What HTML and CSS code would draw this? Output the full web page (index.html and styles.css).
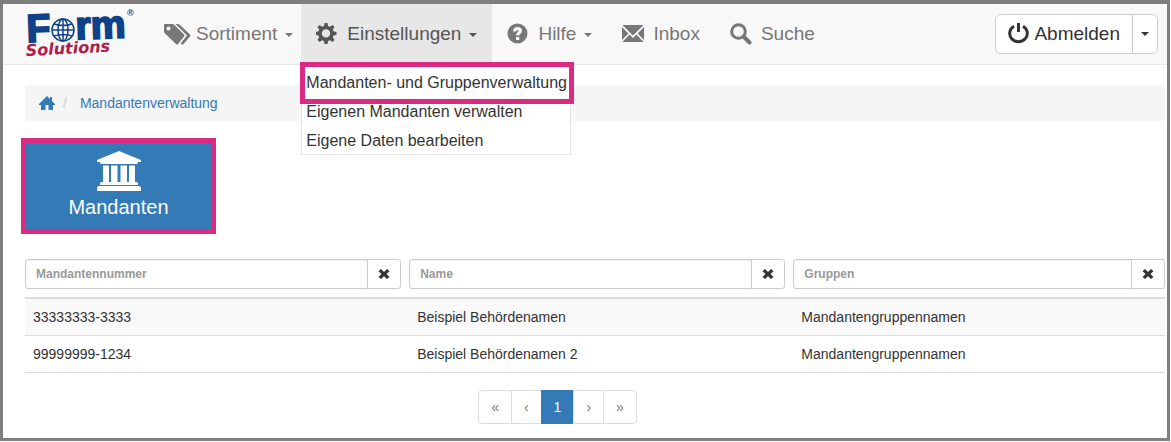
FILE: index.html
```html
<!DOCTYPE html>
<html lang="de">
<head>
<meta charset="utf-8">
<title>Mandantenverwaltung</title>
<meta name="viewport" content="width=device-width, initial-scale=1">
<link rel="stylesheet" href="styles.css">
</head>
<body>
<div class="page">
  <header class="navbar">
    <a class="brand" href="#" aria-label="Form Solutions">
      <svg class="logo" viewBox="0 0 112 60" width="112" height="60">
        <g transform="rotate(-2 3 37)" class="logo-form">
          <text x="2" y="38">F</text>
          <text x="51" y="37">rm</text>
        </g>
        <g class="globe">
          <circle cx="38" cy="26" r="11"/>
          <ellipse cx="38" cy="26" rx="5" ry="11"/>
          <path d="M38 15v22M27 26h22M29 20q9 3 18 0M29 32q9-3 18 0"/>
        </g>
        <text class="logo-sub" x="1" y="52" transform="rotate(-3 1 52)">Solutions</text>
        <text class="logo-reg" x="102" y="12">®</text>
      </svg>
    </a>
    <nav class="nav">
      <div class="nav-item">
        <a class="nav-link nav-link-tags" href="#">
          <svg class="icon-tags" viewBox="0 0 27 21" width="27" height="21"><path fill-rule="evenodd" d="M1 0h7.500q1 0 2 1l9.500 9.500q1 1 0 2L14 20q-1 1-2 0L1 9.500Q0 8.500 0 7.500V1q0-1 1-1zM4.500 2.500a2 2 0 1 0 0 4 2 2 0 0 0 0-4z"/><path d="M11.500 0H14q1 0 2 1l10 9.500q1 1 0 2L19.500 20q-1 1-2 0l-.8-.8 6.300-7.700z"/></svg>
          <span>Sortiment</span><span class="caret"></span>
        </a>
      </div>
      <div class="nav-item">
        <a class="nav-link open" href="#" aria-expanded="true">
          <svg class="icon" viewBox="0 0 22 22" width="22" height="22"><path fill-rule="evenodd" d="M8.500 0h3l.6 3 1.800.8L16.500 2l2 2-1.700 2.600.7 1.700 3 .6v3l-3 .6-.7 1.800 1.700 2.600-2 2-2.600-1.700-1.800.7-.6 3h-3l-.6-3-1.700-.7L3.600 19l-2.100-2.100 1.700-2.600-.7-1.800-2.500-.6v-3l2.500-.6.7-1.700L1.500 4l2-2 2.700 1.800L8 3zM10 6.200a4.200 4.200 0 1 0 0 8.400 4.200 4.200 0 0 0 0-8.400z"/></svg>
          <span>Einstellungen</span><span class="caret"></span>
        </a>
        <ul class="menu">
          <li class="marked"><a href="#">Mandanten- und Gruppenverwaltung</a></li>
          <li><a href="#">Eigenen Mandanten verwalten</a></li>
          <li><a href="#">Eigene Daten bearbeiten</a></li>
        </ul>
      </div>
      <div class="nav-item">
        <a class="nav-link" href="#">
          <svg class="icon" viewBox="0 0 22 22" width="22" height="22"><circle cx="10.500" cy="10.500" r="10"/><path class="cut" d="M6 8.500Q6.200 4 10.600 4q4.400 0 4.400 3.800 0 1.900-1.600 3-1.100.7-1.100 1.700H9q0-2 1.500-3.200 1-.8 1-1.400 0-1-1-1-1.200 0-1.300 1.600zM9 14h3.300v3H9z"/></svg>
          <span>Hilfe</span><span class="caret"></span>
        </a>
      </div>
      <div class="nav-item">
        <a class="nav-link" href="#">
          <svg class="icon" viewBox="0 0 22 22" width="22" height="22"><path d="M.5 2h21L11 12.500zM0 4l6.300 6.500L0 17zM22 4l-6.300 6.500L22 17zM7.500 11.500 11 15l3.500-3.500 7 7.500H.5z"/></svg>
          <span>Inbox</span>
        </a>
      </div>
      <div class="nav-item">
        <a class="nav-link" href="#">
          <svg class="icon" viewBox="0 0 22 22" width="22" height="22"><path class="line" d="M13.500 13.500l6 6"/><circle class="ring" cx="8.500" cy="8.500" r="6.800"/></svg>
          <span>Suche</span>
        </a>
      </div>
    </nav>
    <div class="btn-group">
      <button class="btn logout" type="button">
        <svg viewBox="0 0 22 22" width="22" height="22"><path class="power" d="M6 3.200a8.800 8.300 0 1 0 9 0"/><path d="M9 0h3v9H9z"/></svg>
        <span>Abmelden</span>
      </button>
      <button class="btn toggle" type="button" aria-label="Mehr"><span class="caret"></span></button>
    </div>
  </header>

  <main class="content">
    <nav class="breadcrumb">
      <a href="#" aria-label="Start"><svg viewBox="0 0 16 14" width="16" height="14"><path d="M8 0l3 3V1h2v4l3 3v1h-2v5H9.500V9h-3v5H2V9H0V8z"/></svg></a>
      <span class="slash">/</span>
      <a href="#">Mandantenverwaltung</a>
    </nav>

    <button class="tile" type="button">
      <svg viewBox="0 0 44 40" width="44" height="40"><path d="M22 0l22 9v2h-3q0 2-1.500 2h-35Q3 13 3 11H0V9zM6 14.500h6V31h2V14.500h6.500V31h3V14.500H30V31h2V14.500h6V31h1.500q1.500 0 1.500 1.500V34H3v-1.500Q3 31 4.500 31H6zM2.500 35h39Q44 35 44 37v3H0v-3q0-2 2.500-2z"/></svg>
      <span>Mandanten</span>
    </button>

    <table class="table">
      <thead>
        <tr>
          <th><div class="filter"><input type="text" placeholder="Mandantennummer" aria-label="Mandantennummer"><button type="button" aria-label="Mandantennummer leeren"><svg viewBox="0 0 12 12" width="12" height="12"><path d="M3 1l3 3 3-3 2.500 2.200L8.500 6l3 3L9 11 6 8.200 3 11 .5 9l3-3-3-2.800z"/></svg></button></div></th>
          <th><div class="filter"><input type="text" placeholder="Name" aria-label="Name"><button type="button" aria-label="Name leeren"><svg viewBox="0 0 12 12" width="12" height="12"><path d="M3 1l3 3 3-3 2.500 2.200L8.500 6l3 3L9 11 6 8.200 3 11 .5 9l3-3-3-2.800z"/></svg></button></div></th>
          <th><div class="filter"><input type="text" placeholder="Gruppen" aria-label="Gruppen"><button type="button" aria-label="Gruppen leeren"><svg viewBox="0 0 12 12" width="12" height="12"><path d="M3 1l3 3 3-3 2.500 2.200L8.500 6l3 3L9 11 6 8.200 3 11 .5 9l3-3-3-2.800z"/></svg></button></div></th>
        </tr>
      </thead>
      <tbody>
        <tr><td>33333333-3333</td><td>Beispiel Behördenamen</td><td>Mandantengruppennamen</td></tr>
        <tr><td>99999999-1234</td><td>Beispiel Behördenamen 2</td><td>Mandantengruppennamen</td></tr>
      </tbody>
    </table>

    <nav class="pagination" aria-label="Seiten">
      <a href="#">«</a><a href="#">‹</a><a class="active" href="#">1</a><a href="#">›</a><a href="#">»</a>
    </nav>
  </main>
</div>
</body>
</html>
```

FILE: styles.css
```css
*, *::after { box-sizing: border-box; }

body {
  margin: 0;
  background: #fff;
  color: #333;
  font: 14px/20px "Liberation Sans", Arial, sans-serif;
}

a { text-decoration: none; }

button, input { font: inherit; }

svg { fill: currentColor; flex: none; }

.page {
  min-height: calc(100vh - 1px);
  margin-right: 1px;
  border: 3px solid #7f7f7f;
  border-top-width: 4px;
}

/* Navigation bar */
.navbar {
  display: flex;
  align-items: center;
  padding: 0 9px 0 22px;
  background: #f8f8f8;
  border-bottom: 1px solid #e7e7e7;
}

.brand { display: flex; width: 124px; }

.logo { overflow: visible; }

.logo-form {
  fill: #0f4189;
  stroke: #0f4189;
  stroke-width: 2;
  font: bold 39px "Liberation Sans", Arial, sans-serif;
}

.globe { fill: none; stroke: #0f4189; stroke-width: 1.5; }

.logo-sub {
  fill: #b01c48;
  font: italic bold 16px "DejaVu Sans", sans-serif;
}

.logo-reg { fill: #0f4189; font: bold 9px "Liberation Sans", sans-serif; }

.nav { display: flex; flex: 1; }

.nav-item { position: relative; }

.nav-link {
  display: flex;
  align-items: center;
  height: 60px;
  padding: 0 15px;
  color: #777;
  font-size: 19px;
}

.nav-link-tags { padding-right: 8px; }

.nav-link.open { background: #e7e7e7; color: #555; }

.icon { margin-right: 9px; }

.icon-tags { margin-right: 5px; }

.cut { fill: #f8f8f8; }

.line { stroke: currentColor; stroke-width: 4; stroke-linecap: round; }

.ring { fill: none; stroke: currentColor; stroke-width: 3; }

.power { fill: none; stroke: currentColor; stroke-width: 3; }

.caret {
  border: 4px solid transparent;
  border-top-color: currentColor;
  border-bottom: 0;
}

.nav-link .caret { margin: 2px 0 0 8px; }

.menu {
  position: absolute;
  top: 61px;
  left: 0;
  z-index: 1;
  margin: 0;
  padding: 3px 3px 0 4px;
  list-style: none;
  background: #fff;
  border: 1px solid #e4e4e4;
  border-top: 0;
}

.menu a {
  display: block;
  color: #333;
  font-size: 16px;
  line-height: 29px;
  white-space: nowrap;
}

.menu li:last-child { height: 28px; }

/* Highlight frame around the selected entry */
.marked::after {
  content: "";
  position: absolute;
  top: -3px;
  left: -2px;
  right: -4px;
  height: 42px;
  border: 5px solid #db2a82;
}

.btn-group { display: flex; }

.btn {
  display: flex;
  align-items: center;
  height: 40px;
  border: 1px solid #ccc;
  background: #fff;
  color: #333;
  font-size: 19px;
}

.logout { gap: 4px; padding: 0 12px; border-radius: 6px 0 0 6px; }

.toggle { margin-left: -1px; padding: 0 8px; border-radius: 0 6px 6px 0; }

/* Page body */
.content { padding: 20px 2px 14px 22px; }

.breadcrumb {
  display: flex;
  align-items: center;
  height: 36px;
  padding: 0 14px;
  border-radius: 4px;
  background: #f5f5f5;
}

.breadcrumb a { display: flex; color: #337ab7; }

.slash { padding: 0 13px 0 8px; color: #ccc; }

.tile {
  display: flex;
  flex-direction: column;
  align-items: center;
  gap: 4px;
  width: 195px;
  margin: 17px 0 25px -4px;
  padding: 8px 0 9px;
  border: 5px solid #db2a82;
  background: #337ab7;
  color: #fff;
  font-size: 20px;
  line-height: 25px;
}

.table {
  width: 100%;
  table-layout: fixed;
  border-collapse: separate;
  border-spacing: 0;
}

.table th {
  padding: 0 8px 8px 0;
  border-bottom: 2px solid #ddd;
}

.table th:first-child, .table th:nth-child(2) { width: 33.7%; }

.table th:last-child { padding-right: 0; }

.table td { padding: 8px; border-bottom: 1px solid #ddd; }

.table tbody tr:nth-child(odd) { background: #f9f9f9; }

.filter { display: flex; height: 30px; }

.filter input {
  flex: 1;
  min-width: 0;
  padding: 0 10px;
  border: 1px solid #ccc;
  border-radius: 3px 0 0 3px;
  box-shadow: inset 0 1px 1px rgba(0, 0, 0, .075);
  font-size: 12px;
  font-weight: bold;
}

.filter input::placeholder { color: #999; opacity: 1; }

.filter button {
  display: flex;
  align-items: center;
  justify-content: center;
  width: 34px;
  margin-left: -1px;
  padding: 0;
  border: 1px solid #ccc;
  border-radius: 0 3px 3px 0;
  background: #fff;
  color: #333;
}

.pagination {
  display: flex;
  justify-content: center;
  margin-top: 17px;
  padding-right: 74px;
}

.pagination a {
  margin-left: -1px;
  padding: 6px 12px;
  border: 1px solid #ddd;
  color: #777;
}

.pagination a:first-child { border-radius: 4px 0 0 4px; }

.pagination a:last-child { border-radius: 0 4px 4px 0; }

.pagination .active {
  border-color: #337ab7;
  background: #337ab7;
  color: #fff;
}
```
